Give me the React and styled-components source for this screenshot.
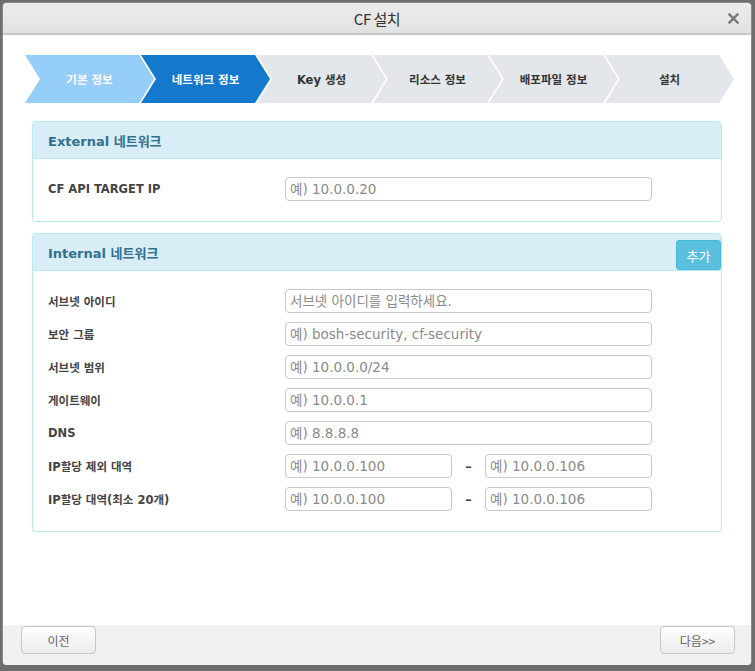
import React from 'react';
import styled, { createGlobalStyle } from 'styled-components';

const GlobalStyle = createGlobalStyle`
    html, body {
        margin: 0;
        padding: 0;
        background: #6e6e6e;
        font-family: "DejaVu Sans", "Noto Sans CJK KR", sans-serif;
    }
`;

const Dialog = styled.div`
    margin: 3px 0 0 3px;
    width: 748px;
    height: 662px;
    background: #fff;
    border-radius: 4px;
    overflow: hidden;
    display: flex;
    flex-direction: column;
    box-shadow: 0 0 0 1px #8a8a8a;
`;

const TitleBar = styled.div`
    height: 30px;
    flex: none;
    position: relative;
    display: flex;
    align-items: center;
    justify-content: center;
    background: linear-gradient(#ececec, #e2e2e2);
    border-bottom: 2px solid #c6c6c6;
    span{
        font-family: "Noto Sans CJK KR", sans-serif;
        font-size: 15px;
        letter-spacing: -0.5px;
        color: #333;
    }
`;

const Close = styled.div`
    position: absolute;
    right: 12px;
    top: 10px;
    width: 11px;
    height: 11px;
    display: flex;
`;

const Content = styled.div`
    flex: 1;
    padding: 20px 0 0;
`;

const Steps = styled.div`
    display: flex;
    margin: 0 22px;
    height: 48px;
`;

const Step = styled.div`
    width: 129px;
    flex: none;
    margin-left: ${p => p.$first ? '0' : '-13px'};
    display: flex;
    align-items: center;
    justify-content: center;
    font-size: 11.5px;
    font-weight: 700;
    color: ${p => p.$state === 'todo' ? '#333' : '#fff'};
    background: ${p => p.$state === 'done' ? '#96cefa' : p.$state === 'active' ? '#1479cd' : '#e3e6ea'};
    clip-path: polygon(0 0, calc(100% - 15px) 0, 100% 50%, calc(100% - 15px) 100%, 0 100%, 15px 50%);
`;

const Panel = styled.div`
    margin: ${p => p.$top}px 29px 0;
    border: 1px solid #bce8f1;
    border-radius: 4px;
    overflow: hidden;
`;

const PanelHead = styled.div`
    height: 36px;
    background: #d9edf7;
    border-bottom: 1px solid #bce8f1;
    display: flex;
    align-items: center;
    padding-left: 15px;
    span{
        font-size: 13px;
        font-weight: 700;
        color: #31708f;
        margin-right: auto;
    }
`;

const AddButton = styled.button`
    align-self: flex-end;
    width: 45px;
    height: 30px;
    border: 1px solid #46b8da;
    border-radius: 3px;
    background: #5bc0de;
    color: #fff;
    font-family: "Noto Sans CJK KR", sans-serif;
    font-size: 13px;
    padding: 0;
`;

const PanelBody = styled.div`
    padding: ${p => p.$pad};
    display: flex;
    flex-direction: column;
    gap: 9px;
`;

const Row = styled.div`
    display: flex;
    align-items: center;
    height: 24px;
`;

const Label = styled.div`
    width: 237px;
    font-size: 11.5px;
    font-weight: 700;
    color: #444;
`;

const Input = styled.input`
    width: ${p => p.$w}px;
    height: 24px;
    box-sizing: border-box;
    border: 1px solid #c8c8c8;
    border-radius: 4px;
    padding: 0 4px;
    font-family: "DejaVu Sans", "Noto Sans CJK KR", sans-serif;
    font-size: 13.5px;
    outline: none;
    &::placeholder{
        color: #8a8a8a;
    }
`;

const Dash = styled.span`
    width: 33px;
    text-align: center;
    font-size: 13px;
    font-weight: 700;
    color: #444;
`;

const Footer = styled.div`
    height: 39px;
    flex: none;
    background: #f1f1f1;
    display: flex;
    justify-content: space-between;
    align-items: flex-start;
    padding: 1px 16px 0 18px;
`;

const FooterButton = styled.button`
    width: 75px;
    height: 28px;
    border: 1px solid #c6c6c6;
    border-radius: 4px;
    background: linear-gradient(#fefefe, #ececec);
    color: #666;
    font-family: "Noto Sans CJK KR", sans-serif;
    font-size: 12px;
    padding: 0;
`;

const steps = [
    { t: '기본 정보', s: 'done' },
    { t: '네트워크 정보', s: 'active' },
    { t: 'Key 생성', s: 'todo' },
    { t: '리소스 정보', s: 'todo' },
    { t: '배포파일 정보', s: 'todo' },
    { t: '설치', s: 'todo' },
];

const internalRows = [
    ['서브넷 아이디', '서브넷 아이디를 입력하세요.'],
    ['보안 그룹', '예) bosh-security, cf-security'],
    ['서브넷 범위', '예) 10.0.0.0/24'],
    ['게이트웨이', '예) 10.0.0.1'],
    ['DNS', '예) 8.8.8.8'],
];

const rangeRows = ['IP할당 제외 대역', 'IP할당 대역(최소 20개)'];

export default function App(){
    return (
        <>
            <GlobalStyle />
            <Dialog>
                <TitleBar>
                    <span>CF 설치</span>
                    <Close>
                        <svg width="11" height="11" viewBox="0 0 11 11">
                            <path d="M1.5 1.5 L9.5 9.5 M9.5 1.5 L1.5 9.5" stroke="#777" strokeWidth="2.4" strokeLinecap="square" />
                        </svg>
                    </Close>
                </TitleBar>
                <Content>
                    <Steps>
                        {steps.map((st, i) => (
                            <Step key={st.t} $first={i === 0} $state={st.s}>{st.t}</Step>
                        ))}
                    </Steps>

                    <Panel $top={18}>
                        <PanelHead><span>External 네트워크</span></PanelHead>
                        <PanelBody $pad="18px 15px 20px">
                            <Row>
                                <Label>CF API TARGET IP</Label>
                                <Input $w={367} placeholder="예) 10.0.0.20" />
                            </Row>
                        </PanelBody>
                    </Panel>

                    <Panel $top={11}>
                        <PanelHead>
                            <span>Internal 네트워크</span>
                            <AddButton>추가</AddButton>
                        </PanelHead>
                        <PanelBody $pad="18px 15px 20px">
                            {internalRows.map(([l, ph]) => (
                                <Row key={l}>
                                    <Label>{l}</Label>
                                    <Input $w={367} placeholder={ph} />
                                </Row>
                            ))}
                            {rangeRows.map(l => (
                                <Row key={l}>
                                    <Label>{l}</Label>
                                    <Input $w={167} placeholder="예) 10.0.0.100" />
                                    <Dash>–</Dash>
                                    <Input $w={167} placeholder="예) 10.0.0.106" />
                                </Row>
                            ))}
                        </PanelBody>
                    </Panel>
                </Content>
                <Footer>
                    <FooterButton>이전</FooterButton>
                    <FooterButton>다음&gt;&gt;</FooterButton>
                </Footer>
            </Dialog>
        </>
    );
}
